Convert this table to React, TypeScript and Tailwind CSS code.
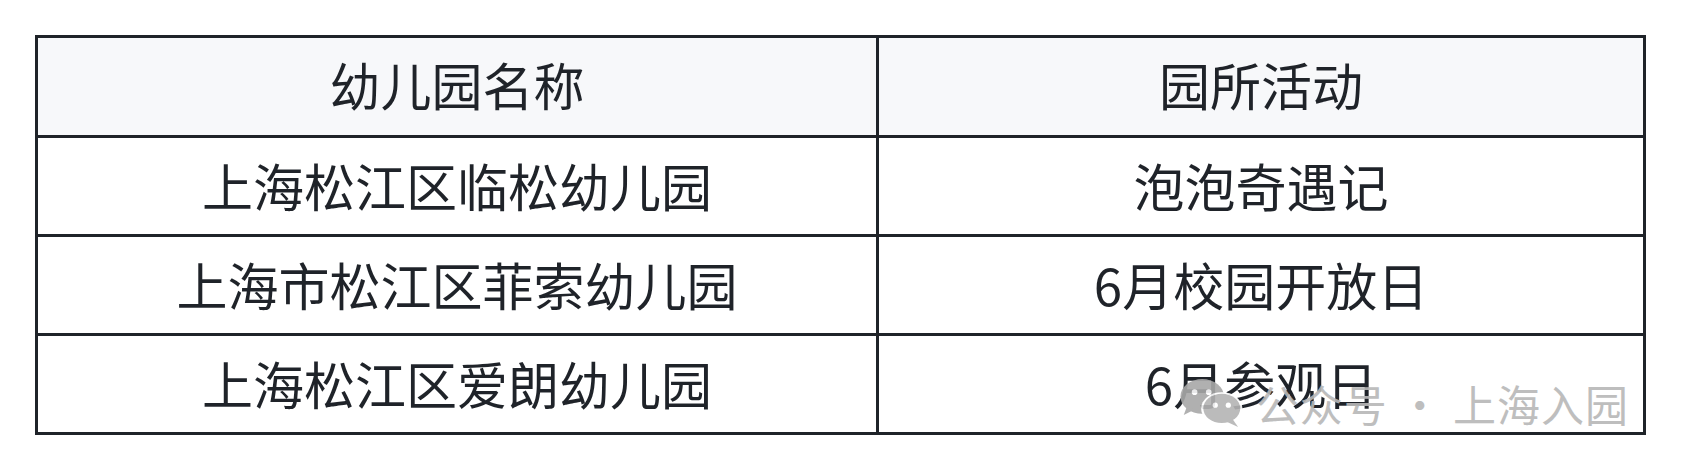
const rows = [
  ["上海松江区临松幼儿园", "泡泡奇遇记"],
  ["上海市松江区菲索幼儿园", "6月校园开放日"],
  ["上海松江区爱朗幼儿园", "6月参观日"],
];

function WeChatIcon() {
  return (
    <svg width="68" height="50" viewBox="0 0 62 46" className="shrink-0">
      {/* back bubble */}
      <ellipse cx="22" cy="17" rx="20" ry="16" fill="#a8a8a8" />
      <path d="M8 26 L5 34 L15 29 Z" fill="#a8a8a8" />
      <circle cx="15" cy="13" r="2.6" fill="#ffffff" />
      <circle cx="28" cy="13" r="2.6" fill="#ffffff" />
      {/* front bubble */}
      <ellipse cx="40" cy="28" rx="19" ry="15" fill="#ffffff" />
      <ellipse cx="40" cy="28" rx="17" ry="13.5" fill="#b4b4b4" />
      <path d="M50 38 L55 45 L44 40 Z" fill="#b4b4b4" />
      <circle cx="34" cy="25" r="2.4" fill="#ffffff" />
      <circle cx="46" cy="25" r="2.4" fill="#ffffff" />
    </svg>
  );
}

export default function App() {
  return (
    <div
      className="w-[1684px] h-[474px] bg-white pt-[35px] pl-[35px] text-[#1f2329]"
      style={{ fontFamily: '"Noto Sans CJK SC", "Noto Sans", sans-serif' }}
    >
      <div className="relative w-[1611px] border-[3px] border-[#1f2329]">
        {/* Header */}
        <div className="flex h-[100px] border-b-[3px] border-[#1f2329] bg-[#f7f8fa]">
          <div className="w-[841px] border-r-[3px] border-[#1f2329] flex items-center justify-center text-[51px] leading-none pb-[4px]">
            幼儿园名称
          </div>
          <div className="flex-1 flex items-center justify-center text-[51px] leading-none pb-[4px]">
            园所活动
          </div>
        </div>

        {rows.map(([name, activity], i) => (
          <div
            key={name}
            className={`flex ${i < rows.length - 1 ? "h-[99px] border-b-[3px] border-[#1f2329]" : "h-[96px]"}`}
          >
            <div className="w-[841px] border-r-[3px] border-[#1f2329] flex items-center justify-center text-[51px] leading-none pb-[2px]">
              {name}
            </div>
            <div className="flex-1 flex items-center justify-center text-[51px] leading-none pb-[2px]">
              {activity}
            </div>
          </div>
        ))}

        {/* Watermark */}
        <div className="absolute right-[14px] bottom-[4px] flex items-center gap-[10px] opacity-90">
          <WeChatIcon />
          <span className="text-[43px] leading-none text-[#b8b8b8] tracking-[1px]">
            公众号 · 上海入园
          </span>
        </div>
      </div>
    </div>
  );
}
